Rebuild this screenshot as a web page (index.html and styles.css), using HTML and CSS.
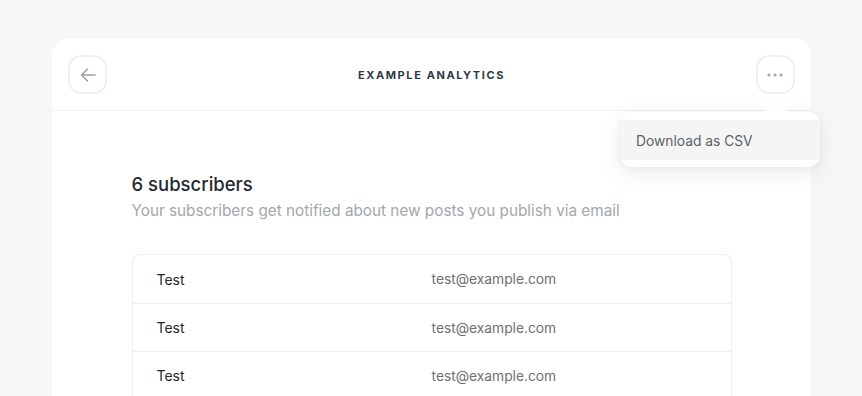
FILE: index.html
```html
<!DOCTYPE html>
<html>
<head>
<meta charset="utf-8">
<link rel="stylesheet" href="styles.css">
</head>
<body>
<div class="card">
  <header class="card-header">
    <button class="icon-btn" aria-label="Back">
      <svg width="20" height="20" viewBox="0 0 20 20" fill="none" stroke="#9ca1a6" stroke-width="1.6" stroke-linecap="round" stroke-linejoin="round"><path d="M17 10H3.5M9.5 4L3.5 10l6 6"/></svg>
    </button>
    <h1 class="title">EXAMPLE ANALYTICS</h1>
    <div class="menu-wrap">
      <button class="icon-btn" aria-label="More">
        <svg width="16" height="4" viewBox="0 0 16 4" fill="#a3a7ab"><circle cx="2" cy="2" r="1.6"/><circle cx="8" cy="2" r="1.6"/><circle cx="14" cy="2" r="1.6"/></svg>
      </button>
      <div class="dropdown">
        <div class="dropdown-item">Download as CSV</div>
      </div>
    </div>
  </header>
  <main class="card-body">
    <div class="content">
      <h2 class="count">6 subscribers</h2>
      <p class="desc">Your subscribers get notified about new posts you publish via email</p>
      <div class="table">
        <div class="row"><span class="name">Test</span><span class="email">test@example.com</span></div>
        <div class="row"><span class="name">Test</span><span class="email">test@example.com</span></div>
        <div class="row"><span class="name">Test</span><span class="email">test@example.com</span></div>
      </div>
    </div>
  </main>
</div>
</body>
</html>
```
FILE: styles.css
```css
* { box-sizing: border-box; }
html, body { margin: 0; padding: 0; }
body {
  background: #f6f7f7;
  font-family: Inter, "Noto Sans", sans-serif;
  overflow: hidden;
  height: 396px;
  padding: 39px 51px 0 52px;
}
.card {
  background: #fff;
  border-radius: 16px 16px 0 0;
  height: 400px;
}
.card-header {
  height: 72px;
  border-bottom: 1px solid #f1f2f3;
  display: flex;
  align-items: center;
  justify-content: space-between;
  padding: 0 16px 0 16px;
}
.icon-btn {
  width: 39px;
  height: 39px;
  border: 2px solid #eeefef;
  border-radius: 13px;
  background: #fff;
  display: flex;
  align-items: center;
  justify-content: center;
  padding: 0;
  cursor: pointer;
}
.title {
  margin: 0;
  font-size: 11px;
  font-weight: 700;
  letter-spacing: 1.6px;
  color: #2d3a44;
}
.menu-wrap { position: relative; }
.dropdown {
  position: absolute;
  top: 57px;
  right: -25px;
  width: 200px;
  background: #fff;
  border-radius: 12px;
  padding: 8px 0 7px;
  box-shadow: 0 6px 24px rgba(0,0,0,0.08), 0 2px 6px rgba(0,0,0,0.04);
  z-index: 2;
}
.dropdown::before {
  content: "";
  position: absolute;
  top: -11px;
  right: 32px;
  border-left: 12px solid transparent;
  border-right: 12px solid transparent;
  border-bottom: 12px solid #fff;
}
.dropdown-item {
  background: #f4f5f5;
  height: 40px;
  display: flex;
  align-items: center;
  padding: 1px 16px 0;
  font-size: 13.8px;
  color: #5c6166;
}
.card-body { padding: 0 16px; }
.content {
  max-width: 600px;
  margin: 0 auto;
  padding-top: 59px;
}
.count {
  margin: 0;
  font-size: 18.5px;
  line-height: 28px;
  font-weight: 500;
  color: #1f2a33;
}
.desc {
  margin: 0;
  font-size: 15.3px;
  line-height: 26px;
  color: #a3a7ab;
}
.table {
  margin-top: 30px;
  border: 1px solid #eeeff0;
  border-radius: 8px;
  border-bottom: none;
  border-bottom-left-radius: 0;
  border-bottom-right-radius: 0;
}
.row {
  display: grid;
  grid-template-columns: 1fr 1fr;
  padding: 0 24px;
  height: 48px;
  align-items: center;
  font-size: 14px;
}
.row + .row { border-top: 1px solid #eeeff0; }
.name { color: #1f2a33; }
.email { color: #6b7075; font-size: 13.8px; }
```
